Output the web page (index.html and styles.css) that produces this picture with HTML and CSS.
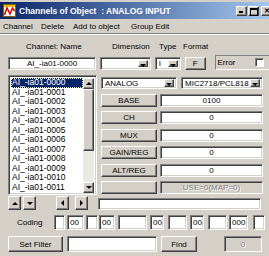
FILE: index.html
```html
<!DOCTYPE html>
<html>
<head>
<meta charset="utf-8">
<link rel="stylesheet" href="styles.css">
</head>
<body>
<div class="win">
  <div class="title">
    <svg class="appicon" width="13" height="13" viewBox="0 0 13 13">
      <rect x="0.5" y="0.5" width="12" height="12" fill="#fff" stroke="#806000"/>
      <rect x="1" y="1" width="11" height="2" fill="#f0c000"/>
      <polyline points="1.5,11 4,4 7,10 9.5,4 11.5,7" fill="none" stroke="#e00000" stroke-width="1.5"/>
    </svg>
    <span class="ttext">Channels of Object&nbsp; : ANALOG INPUT</span>
    <div class="tbtns">
      <span class="tbtn tmin"></span><span class="tbtn tmax"></span><span class="tbtn tclose">✕</span>
    </div>
  </div>
  <div class="menu">
    <span class="mi m1">Channel</span><span class="mi m2">Delete</span><span class="mi m3">Add to object</span><span class="mi m4">Group Edit</span>
  </div>
  <div class="sep"></div>
  <div class="dlg">
    <div class="labels">
      <span class="lb l1">Channel: Name</span><span class="lb l2">Dimension</span><span class="lb l3">Type</span><span class="lb l4">Format</span>
    </div>
    <div class="row2">
      <div class="field name">AI_-ia01-0000</div>
      <div class="combo dim"><span class="ctext"></span><span class="dd"></span></div>
      <div class="combo type"><span class="ctext">I</span><span class="dd"></span></div>
      <div class="btn fbtn">F</div>
      <div class="errbox"><span>Error</span><span class="chk"></span></div>
    </div>
    <div class="main">
      <div class="list">
        <div class="items">
          <div class="item sel">AI_-ia01-0000</div>
          <div class="item">AI_-ia01-0001</div>
          <div class="item">AI_-ia01-0002</div>
          <div class="item">AI_-ia01-0003</div>
          <div class="item">AI_-ia01-0004</div>
          <div class="item">AI_-ia01-0005</div>
          <div class="item">AI_-ia01-0006</div>
          <div class="item">AI_-ia01-0007</div>
          <div class="item">AI_-ia01-0008</div>
          <div class="item">AI_-ia01-0009</div>
          <div class="item">AI_-ia01-0010</div>
          <div class="item">AI_-ia01-0011</div>
        </div>
        <div class="sbar">
          <div class="sbtn"><span class="tri up"></span></div>
          <div class="thumb"></div>
          <div class="track"></div>
          <div class="sbtn"><span class="tri down"></span></div>
        </div>
      </div>
      <div class="rcol">
        <div class="rrow r0">
          <div class="combo analog"><span class="ctext">ANALOG</span><span class="dd"></span></div>
          <div class="combo mic"><span class="ctext">MIC2718/PCL818</span><span class="dd"></span></div>
        </div>
        <div class="rrow r1"><div class="btn pb">BASE</div><div class="field val">0100</div></div>
        <div class="rrow"><div class="btn pb">CH</div><div class="field val">0</div></div>
        <div class="rrow"><div class="btn pb">MUX</div><div class="field val">0</div></div>
        <div class="rrow"><div class="btn pb">GAIN/REG</div><div class="field val">0</div></div>
        <div class="rrow"><div class="btn pb">ALT/REG</div><div class="field val">0</div></div>
        <div class="rrow"><div class="btn pb"></div><div class="field val dis">USE=0(MAP=0)</div></div>
      </div>
    </div>
    <div class="arrows">
      <div class="btn abtn"><span class="tri up"></span></div>
      <div class="btn abtn a2"><span class="tri down"></span></div>
      <div class="btn abtn a3"><span class="tri left"></span></div>
      <div class="btn abtn a4"><span class="tri right"></span></div>
      <div class="field along"></div>
    </div>
    <div class="coding">
      <span class="clabel">Coding</span>
      <div class="field c c1"></div><div class="field c c2">00</div>
      <div class="field c c3"></div><div class="field c c4">00</div>
      <div class="field c c5"></div><div class="field c c6">00</div>
      <div class="field c c7"></div><div class="field c c8">00</div>
      <div class="field c c9"></div><div class="field c c10">000</div>
      <div class="field c c11"></div>
    </div>
    <div class="filter">
      <div class="btn setf">Set Filter</div>
      <div class="field finput"></div>
      <div class="btn find">Find</div>
      <div class="field dis zero">0</div>
    </div>
  </div>
</div>
</body>
</html>
```

FILE: styles.css
```css
* { box-sizing: border-box; }
html, body { margin: 0; padding: 0; }
body {
  background: #d4d0c8;
  font-family: "Liberation Sans", Arial, sans-serif;
  font-size: 8px;
  color: #000;
  width: 269px;
  height: 256px;
  overflow: hidden;
}
.win { width: 274px; padding-top: 2px; }

.title {
  height: 17px;
  background: linear-gradient(to right, #0a246a, #a6caf0);
  display: flex;
  align-items: center;
  padding: 0 2px 0 3px;
  color: #fff;
  font-weight: bold;
  font-size: 8.5px;
}
.appicon { flex: none; margin-right: 3px; }
.ttext { white-space: pre; }
.tbtns { margin-left: auto; display: flex; align-items: center; }
.tbtn {
  width: 11px; height: 10px;
  background: #d4d0c8;
  border: 1px solid; border-color: #fff #404040 #404040 #fff;
  box-shadow: inset -1px -1px 0 #808080;
  position: relative;
  font-size: 7px; line-height: 8px; text-align: center; color: #000;
}
.tmax { margin-left: 1px; }
.tclose { margin-left: 2px; }
.tmin::after {
  content: ""; position: absolute; left: 2px; bottom: 2px; width: 4px; height: 2px; background: #000;
}
.tmax::after {
  content: ""; position: absolute; left: 1px; top: 1px; width: 6px; height: 5px;
  border: 1px solid #000; border-top-width: 2px;
}

.menu { height: 14px; display: flex; align-items: center; padding-left: 3px; }
.mi { display: block; }
.m1 { width: 38px; }
.m2 { width: 32px; }
.m3 { width: 58px; }
.sep { height: 2px; border-top: 1px solid #808080; border-bottom: 1px solid #fff; }

.dlg { padding: 6px 0 0 8px; }

.labels { display: flex; height: 11px; line-height: 11px; }
.lb { display: block; }
.l1 { width: 104px; padding-left: 18px; }
.l2 { width: 47px; }
.l3 { width: 24px; }

.field {
  background: #fff;
  border: 1px solid; border-color: #808080 #fff #fff #808080;
  box-shadow: inset 1px 1px 0 #404040, inset -1px -1px 0 #d4d0c8;
  text-align: center;
  display: flex; align-items: center; justify-content: center;
  white-space: nowrap; overflow: hidden;
}
.btn {
  background: #d4d0c8;
  border: 1px solid; border-color: #fff #404040 #404040 #fff;
  box-shadow: inset -1px -1px 0 #808080;
  display: flex; align-items: center; justify-content: center;
  white-space: nowrap;
}
.dis { background: #d4d0c8; color: #808080; text-shadow: 1px 1px 0 #fff; }

.combo {
  background: #fff;
  border: 1px solid; border-color: #808080 #fff #fff #808080;
  box-shadow: inset 1px 1px 0 #404040, inset -1px -1px 0 #d4d0c8;
  display: flex; align-items: stretch;
  padding: 2px;
}
.ctext { flex: 1; display: flex; align-items: center; padding-left: 1px; white-space: nowrap; overflow: hidden; }
.dd {
  width: 10px; flex: none;
  background: #d4d0c8;
  border: 1px solid; border-color: #fff #404040 #404040 #fff;
  box-shadow: inset -1px -1px 0 #808080;
  position: relative;
}
.dd::after, .tri {
  content: ""; display: block; width: 0; height: 0;
  border-left: 3px solid transparent; border-right: 3px solid transparent;
  border-top: 3px solid #000;
}
.dd::after { position: absolute; left: 1px; top: 3px; }
.tri.up { border-top: 0; border-bottom: 3px solid #000; }
.tri.left { border: 3px solid transparent; border-left: 0; border-right: 3px solid #000; }
.tri.right { border: 3px solid transparent; border-right: 0; border-left: 3px solid #000; }

.row2 { display: flex; align-items: flex-end; margin-top: 3px; height: 15px; }
.row2 > .field, .row2 > .combo { height: 13px; }
.name { width: 89px; }
.dim { width: 51px; margin-left: 4px; }
.type { width: 26px; margin-left: 4px; }
.fbtn { width: 21px; height: 13px; margin-left: 4px; }
.errbox {
  width: 60px; height: 15px; margin-left: 9px;
  border: 1px solid; border-color: #808080 #fff #fff #808080;
  display: flex; align-items: center; padding-left: 2px;
}
.chk {
  width: 9px; height: 9px; margin-left: 20px;
  background: #fff;
  border: 1px solid; border-color: #808080 #fff #fff #808080;
  box-shadow: inset 1px 1px 0 #404040;
}

.main { display: flex; margin-top: 5px; height: 120px; }
.list {
  width: 89px; height: 120px;
  background: #fff;
  border: 1px solid; border-color: #808080 #fff #fff #808080;
  box-shadow: inset 1px 1px 0 #404040, inset -1px -1px 0 #d4d0c8;
  padding: 2px 2px 1px 2px;
  display: flex;
  font-size: 8.5px;
}
.items { flex: 1; overflow: hidden; }
.item { height: 9.55px; line-height: 9.55px; padding-left: 1px; white-space: nowrap; }
.item.sel { background: #0a246a; color: #fff; outline: 1px dotted #e8e890; outline-offset: -1px; }
.sbar { width: 11px; display: flex; flex-direction: column; }
.sbtn {
  height: 11px; flex: none;
  background: #d4d0c8;
  border: 1px solid; border-color: #fff #404040 #404040 #fff;
  box-shadow: inset -1px -1px 0 #808080;
  display: flex; align-items: center; justify-content: center;
}
.thumb {
  height: 62px; flex: none;
  background: #d4d0c8;
  border: 1px solid; border-color: #fff #404040 #404040 #fff;
  box-shadow: inset -1px -1px 0 #808080;
}
.track { flex: 1; background: #ebe9e4; }

.rcol { margin-left: 4px; width: 162px; padding-top: 2px; }
.rrow { display: flex; height: 13px; margin-top: 4.4px; }
.rrow.r0 { margin-top: 0; height: 12px; }
.rrow.r1 { margin-top: 5px; }
.analog { width: 76px; padding: 1px 2px; }
.mic { width: 82px; margin-left: 4px; padding: 1px 2px; }
.pb { width: 56px; }
.val { width: 103px; margin-left: 3px; }

.arrows { display: flex; align-items: flex-end; margin-top: 1px; height: 14px; }
.abtn { width: 13px; height: 14px; }
.a2 { margin-left: 2px; }
.a3 { margin-left: 20px; }
.a4 { margin-left: 6px; }
.along { width: 163px; height: 12px; margin-left: 10px; }

.coding { display: flex; align-items: center; margin-top: 5px; height: 15px; }
.clabel { width: 46px; padding-left: 9px; }
.c { height: 15px; justify-content: flex-start; padding-left: 2px; }
.c1 { width: 11px; }
.c2 { width: 17px; margin-left: 2px; }
.c3 { width: 12px; margin-left: 2px; }
.c4 { width: 16px; margin-left: 1px; }
.c5 { width: 29px; margin-left: 3px; }
.c6 { width: 14px; margin-left: 3px; }
.c7 { width: 19px; margin-left: 4px; }
.c8 { width: 14px; margin-left: 3px; }
.c9 { width: 19px; margin-left: 4px; }
.c10 { width: 19px; margin-left: 2px; }
.c11 { width: 12px; margin-left: 5px; }

.filter { display: flex; margin-top: 6px; height: 16px; }
.setf { width: 55px; }
.finput { width: 90px; margin-left: 4px; }
.find { width: 36px; margin-left: 4px; }
.zero { width: 38px; margin-left: 27px; }
```
